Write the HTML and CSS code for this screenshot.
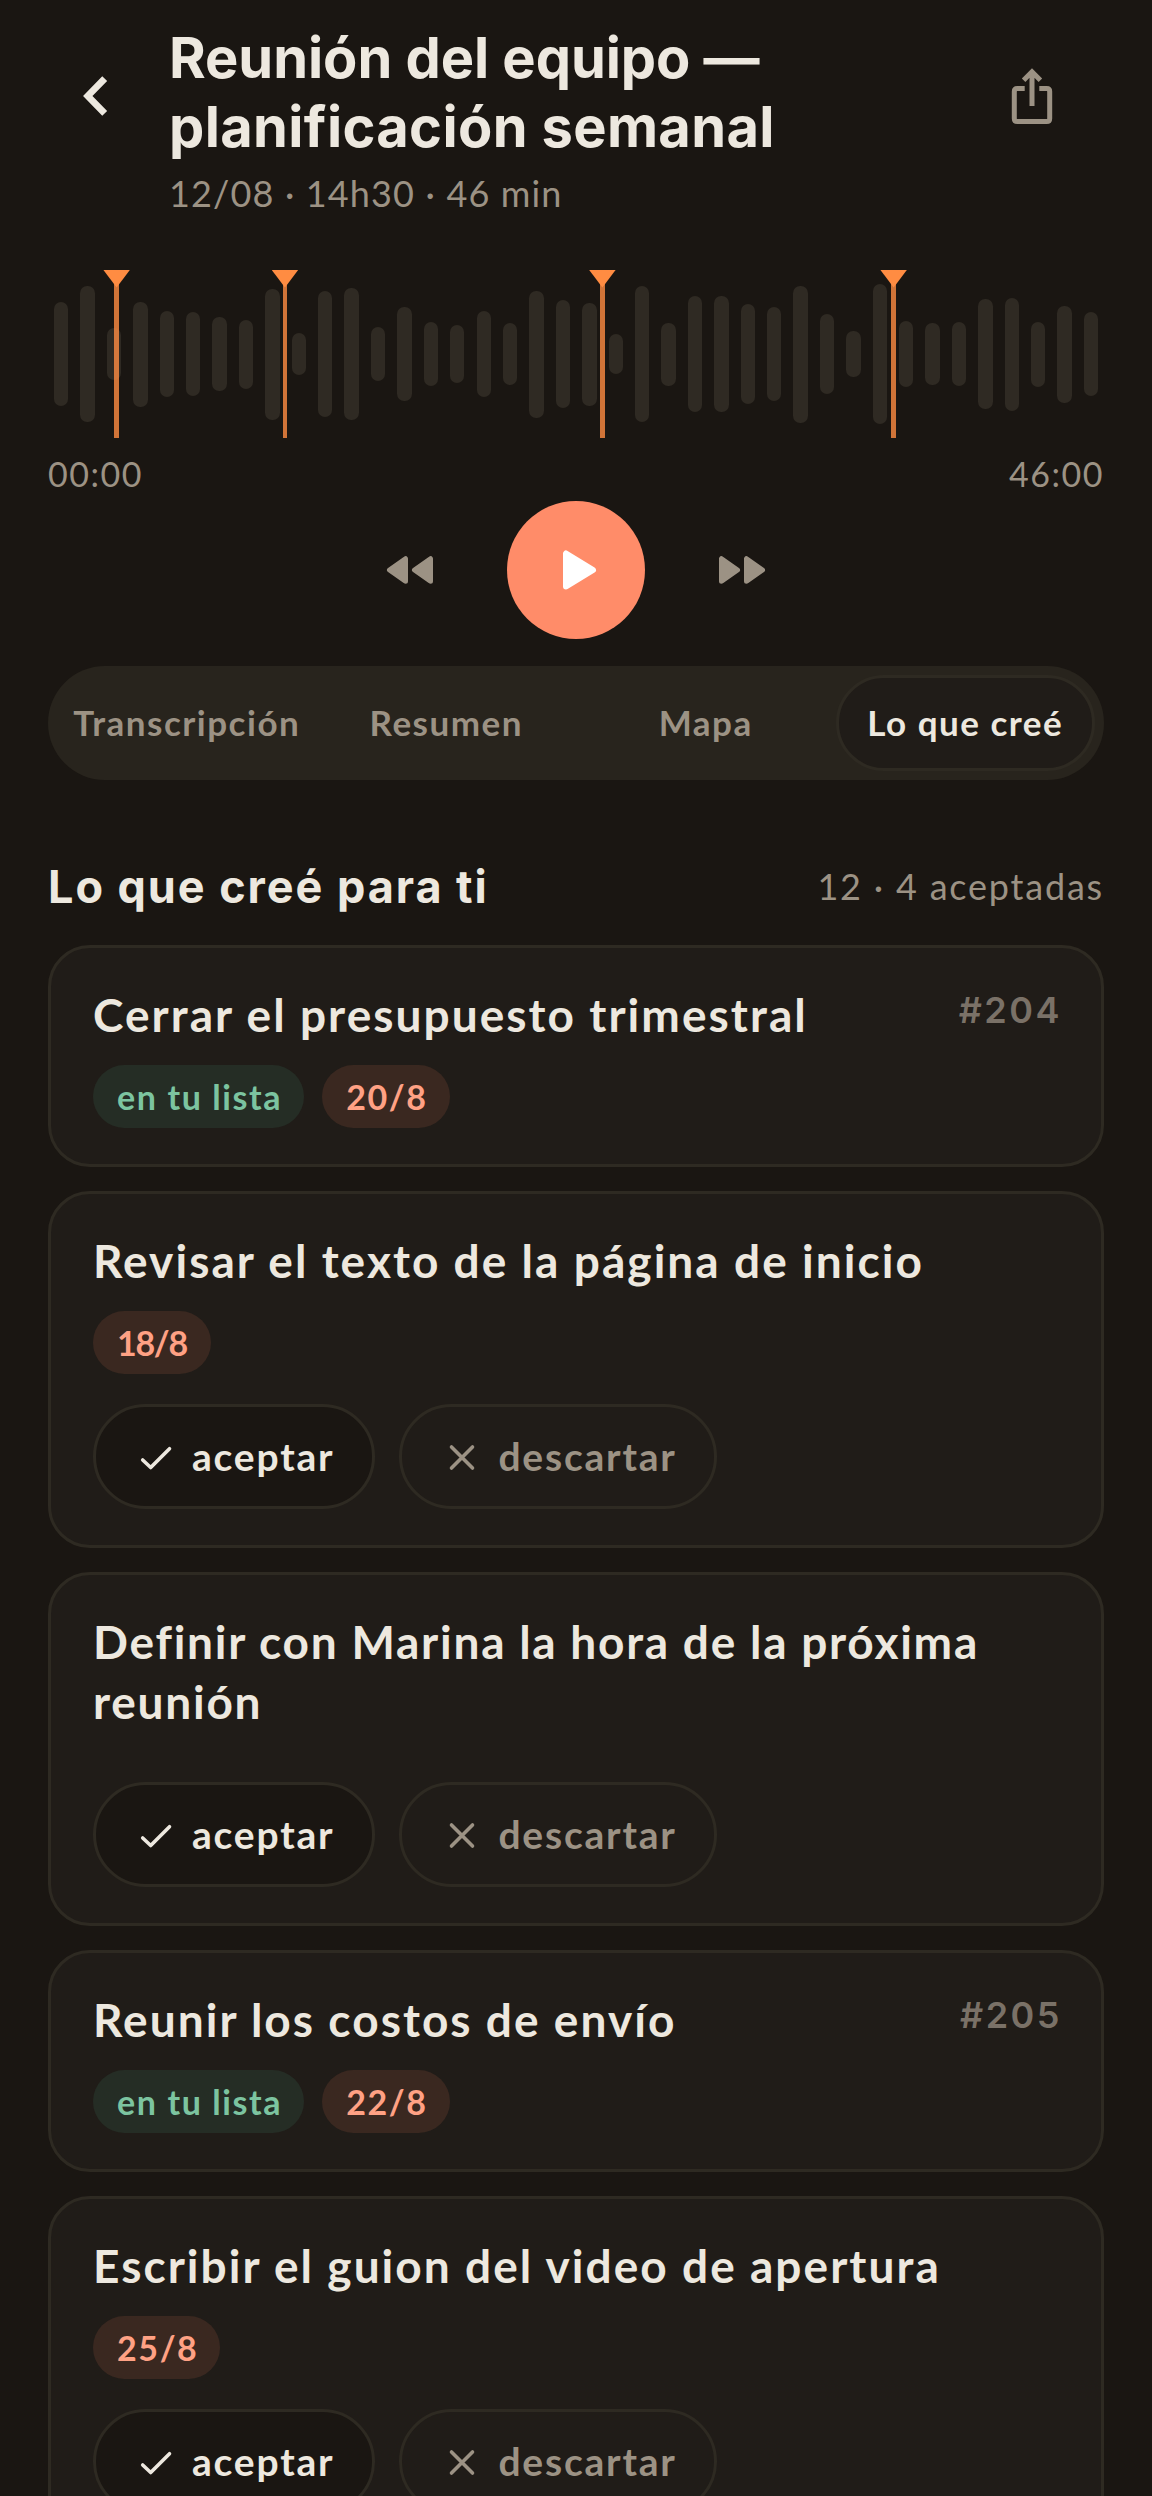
FILE: index.html
```html
<!DOCTYPE html>
<html lang="es">
<head>
<meta charset="utf-8">
<title>Reunión del equipo — planificación semanal</title>
<link rel="stylesheet" href="styles.css">
</head>
<body>
<svg class="sprite" aria-hidden="true">
  <symbol id="check" viewBox="0 0 36 36"><path d="M4.7 21 L12.7 28.5 L31.5 9.7"/></symbol>
  <symbol id="cross" viewBox="0 0 36 36"><path d="M7.5 8 L28.5 29 M28.5 8 L7.5 29"/></symbol>
</svg>
<main class="screen">
  <header class="header">
    <svg class="back" viewBox="0 0 48 48"><path d="M33.7 6.6 L16.8 24 L33.7 41.4"/></svg>
    <div class="heading">
      <h1 class="title">Reunión del equipo —<br><span class="title-wide">planificación semanal</span></h1>
      <p class="subtitle">12/08 · 14h30 · 46 min</p>
    </div>
    <svg class="share" viewBox="0 0 48 60"><path d="M16.7 22.4 H9.3 Q6.3 22.4 6.3 25.4 V52.5 Q6.3 55.5 9.3 55.5 H38.7 Q41.7 55.5 41.7 52.5 V25.4 Q41.7 22.4 38.7 22.4 H31.3 M24 6 V40 M15.6 14.2 L24 5.8 L32.4 14.2"/></svg>
  </header>

  <section class="wave" id="wave">
    <div class="marker" style="left:6.5%"></div>
    <div class="marker" style="left:22.44%"></div>
    <div class="marker" style="left:52.5%"></div>
    <div class="marker" style="left:80.08%"></div>
  </section>
  <div class="times"><span>00:00</span><span>46:00</span></div>

  <div class="controls">
    <svg class="skip" viewBox="0 0 50 32"><path d="M4.5 16 L20.5 4.7 V27.3 Z M29.5 16 L45.5 4.7 V27.3 Z"/></svg>
    <button class="play"><svg viewBox="0 0 36 42"><path d="M4 4.5 V37.5 L31 21 Z"/></svg></button>
    <svg class="skip" viewBox="0 0 50 32"><path d="M4.5 4.7 V27.3 L20.5 16 Z M29.5 4.7 V27.3 L45.5 16 Z"/></svg>
  </div>

  <nav class="tabs">
    <a class="tab">Transcripción</a>
    <a class="tab">Resumen</a>
    <a class="tab">Mapa</a>
    <a class="tab tab-active">Lo que creé</a>
  </nav>

  <div class="section-head">
    <h2 class="section-title">Lo que creé para ti</h2>
    <span class="section-meta">12 · 4 aceptadas</span>
  </div>

  <div class="cards">
    <article class="card">
      <div class="card-top"><h3 class="card-title">Cerrar el presupuesto trimestral</h3><span class="card-id">#204</span></div>
      <div class="pills"><span class="pill pill-green">en tu lista</span><span class="pill pill-orange">20/8</span></div>
    </article>
    <article class="card">
      <h3 class="card-title">Revisar el texto de la página de inicio</h3>
      <div class="pills"><span class="pill pill-orange pill-narrow">18/8</span></div>
      <div class="actions">
        <button class="btn btn-accept"><svg class="icon"><use href="#check"/></svg>aceptar</button>
        <button class="btn"><svg class="icon"><use href="#cross"/></svg>descartar</button>
      </div>
    </article>
    <article class="card">
      <h3 class="card-title card-title-long">Definir con Marina la hora de la próxima reunión</h3>
      <div class="pills"></div>
      <div class="actions">
        <button class="btn btn-accept"><svg class="icon"><use href="#check"/></svg>aceptar</button>
        <button class="btn"><svg class="icon"><use href="#cross"/></svg>descartar</button>
      </div>
    </article>
    <article class="card">
      <div class="card-top"><h3 class="card-title">Reunir los costos de envío</h3><span class="card-id">#205</span></div>
      <div class="pills"><span class="pill pill-green">en tu lista</span><span class="pill pill-orange">22/8</span></div>
    </article>
    <article class="card">
      <h3 class="card-title">Escribir el guion del video de apertura</h3>
      <div class="pills"><span class="pill pill-orange">25/8</span></div>
      <div class="actions">
        <button class="btn btn-accept"><svg class="icon"><use href="#check"/></svg>aceptar</button>
        <button class="btn"><svg class="icon"><use href="#cross"/></svg>descartar</button>
      </div>
    </article>
  </div>
</main>
<script src="wave.js"></script>
</body>
</html>
```
FILE: styles.css
```css
* { box-sizing: border-box; }

body {
  margin: 0;
  height: 2496px;
  overflow: hidden;
  background: #1a1612;
  color: #ede8df;
  font-family: Lato, "Open Sans", sans-serif;
}

h1, h2, h3, p { margin: 0; }
svg { display: block; flex: none; }
button { font: inherit; letter-spacing: inherit; color: inherit; border: 0; background: none; padding: 0; }
.sprite { width: 0; height: 0; position: absolute; }

.screen { padding: 0 48px; }

.header { display: flex; align-items: flex-start; height: 270px; padding-top: 24px; }
.back { width: 48px; height: 48px; margin: 48px 50px 0 23px; fill: none; stroke: #ede8df; stroke-width: 6.8; }
.heading { flex: 1; }
.title { font: 700 56px/69px Inter, sans-serif; letter-spacing: -.05px; white-space: nowrap; }
.title-wide { letter-spacing: .35px; }
.subtitle { margin-top: 7px; font-size: 36px; line-height: 48px; letter-spacing: 1.15px; color: #9c9284; }
.share { width: 48px; height: 60px; margin: 42px 48px 0 0; fill: none; stroke: #9c9284; stroke-width: 5; }

.wave { position: relative; display: flex; align-items: center; height: 168px; }
.bar-cell { flex: 1; display: flex; justify-content: center; }
.bar { width: 14.4px; border-radius: 7.2px; background: #2f2a23; }
.marker { position: absolute; top: 0; bottom: 0; width: 4.8px; margin-left: -2.4px; background: rgba(255, 140, 66, .8); }
.marker::before { content: ""; position: absolute; top: 0; left: -10.8px; width: 26.4px; height: 17.5px; background: #ff8c42; clip-path: polygon(0 0, 100% 0, 50% 100%); }

.times { display: flex; justify-content: space-between; margin-top: 16px; height: 47px; font-size: 34px; line-height: 40px; letter-spacing: 1.5px; color: #9c9284; }

.controls { display: flex; justify-content: center; align-items: center; gap: 72px; height: 138px; }
.skip { width: 50px; height: 32px; fill: #9c9284; stroke: #9c9284; stroke-width: 5; stroke-linejoin: round; }
.play { width: 138px; height: 138px; border-radius: 50%; background: #ff8c69; display: flex; align-items: center; justify-content: center; }
.play svg { width: 36px; height: 42px; margin-left: 8px; fill: #fff; stroke: #fff; stroke-width: 6; stroke-linejoin: round; }

.tabs { display: grid; grid-template-columns: repeat(4, 259.5px); margin-top: 27px; height: 114px; padding: 9px; border-radius: 57px; background: #28241d; }
.tab { display: flex; align-items: center; justify-content: center; padding-bottom: 2px; border-radius: 48px; font-size: 35px; font-weight: 700; letter-spacing: 1.5px; white-space: nowrap; color: #9c9284; }
.tab-active { background: #201c18; border: 3px solid #2e2a22; color: #ede8df; }

.section-head { display: flex; align-items: center; justify-content: space-between; margin-top: 75px; height: 63px; }
.section-title { font: 700 45px/60px Inter, sans-serif; letter-spacing: 1.95px; }
.section-meta { padding-bottom: 2px; font-size: 36px; line-height: 48px; letter-spacing: 1.8px; color: #9c9284; }

.cards { display: flex; flex-direction: column; gap: 24px; margin-top: 27px; }
.card { padding: 36px 42px; border: 3px solid #2e2a22; border-radius: 42px; background: #201c18; }
.card-top { display: flex; justify-content: space-between; align-items: flex-start; }
.card-title { padding-top: 1px; font-size: 46px; line-height: 60px; font-weight: 700; letter-spacing: 2.05px; }
.card-title-long { letter-spacing: 1.75px; }
.card-id { margin: 2px -3px 0 0; font: 600 36px/48px Inter, sans-serif; letter-spacing: 2.5px; color: #7a7167; }

.pills { display: flex; gap: 18px; margin-top: 20px; }
.pill { height: 63px; padding: 0 22px 0 24px; border-radius: 32px; font-size: 34px; line-height: 63px; font-weight: 700; letter-spacing: 1.6px; }
.pill-green { background: #252d25; color: #7cc4a0; }
.pill-orange { background: #3a2820; color: #ffa184; }
.pill-narrow { padding-right: 24px; letter-spacing: -1.3px; }

.actions { display: flex; gap: 24px; margin-top: 30px; }
.btn { display: flex; align-items: center; gap: 18px; height: 105px; padding: 0 37px 2px 42px; border: 3px solid #2e2a22; border-radius: 53px; font-size: 39px; font-weight: 700; letter-spacing: 1.8px; color: #9c9284; }
.btn-accept { padding-right: 38px; background: #1a1612; color: #ede8df; }
.icon { width: 36px; height: 36px; margin-top: 2px; fill: none; stroke: currentColor; stroke-width: 3.6; stroke-linecap: round; stroke-linejoin: round; }
```
FILE: wave.js
```js
const heights = [104, 136, 52, 105, 86, 84, 74, 69, 131, 42, 126, 132, 54, 94, 64, 58, 86, 62, 127, 108,
  103, 40, 136, 63, 116, 116, 100, 94, 137, 80, 46, 140, 66, 62, 64, 110, 113, 65, 97, 84];
const wave = document.getElementById('wave');
const cells = heights.map((h) => {
  const cell = document.createElement('div');
  cell.className = 'bar-cell';
  const bar = document.createElement('div');
  bar.className = 'bar';
  bar.style.height = h + 'px';
  cell.append(bar);
  return cell;
});
wave.prepend(...cells);
```
